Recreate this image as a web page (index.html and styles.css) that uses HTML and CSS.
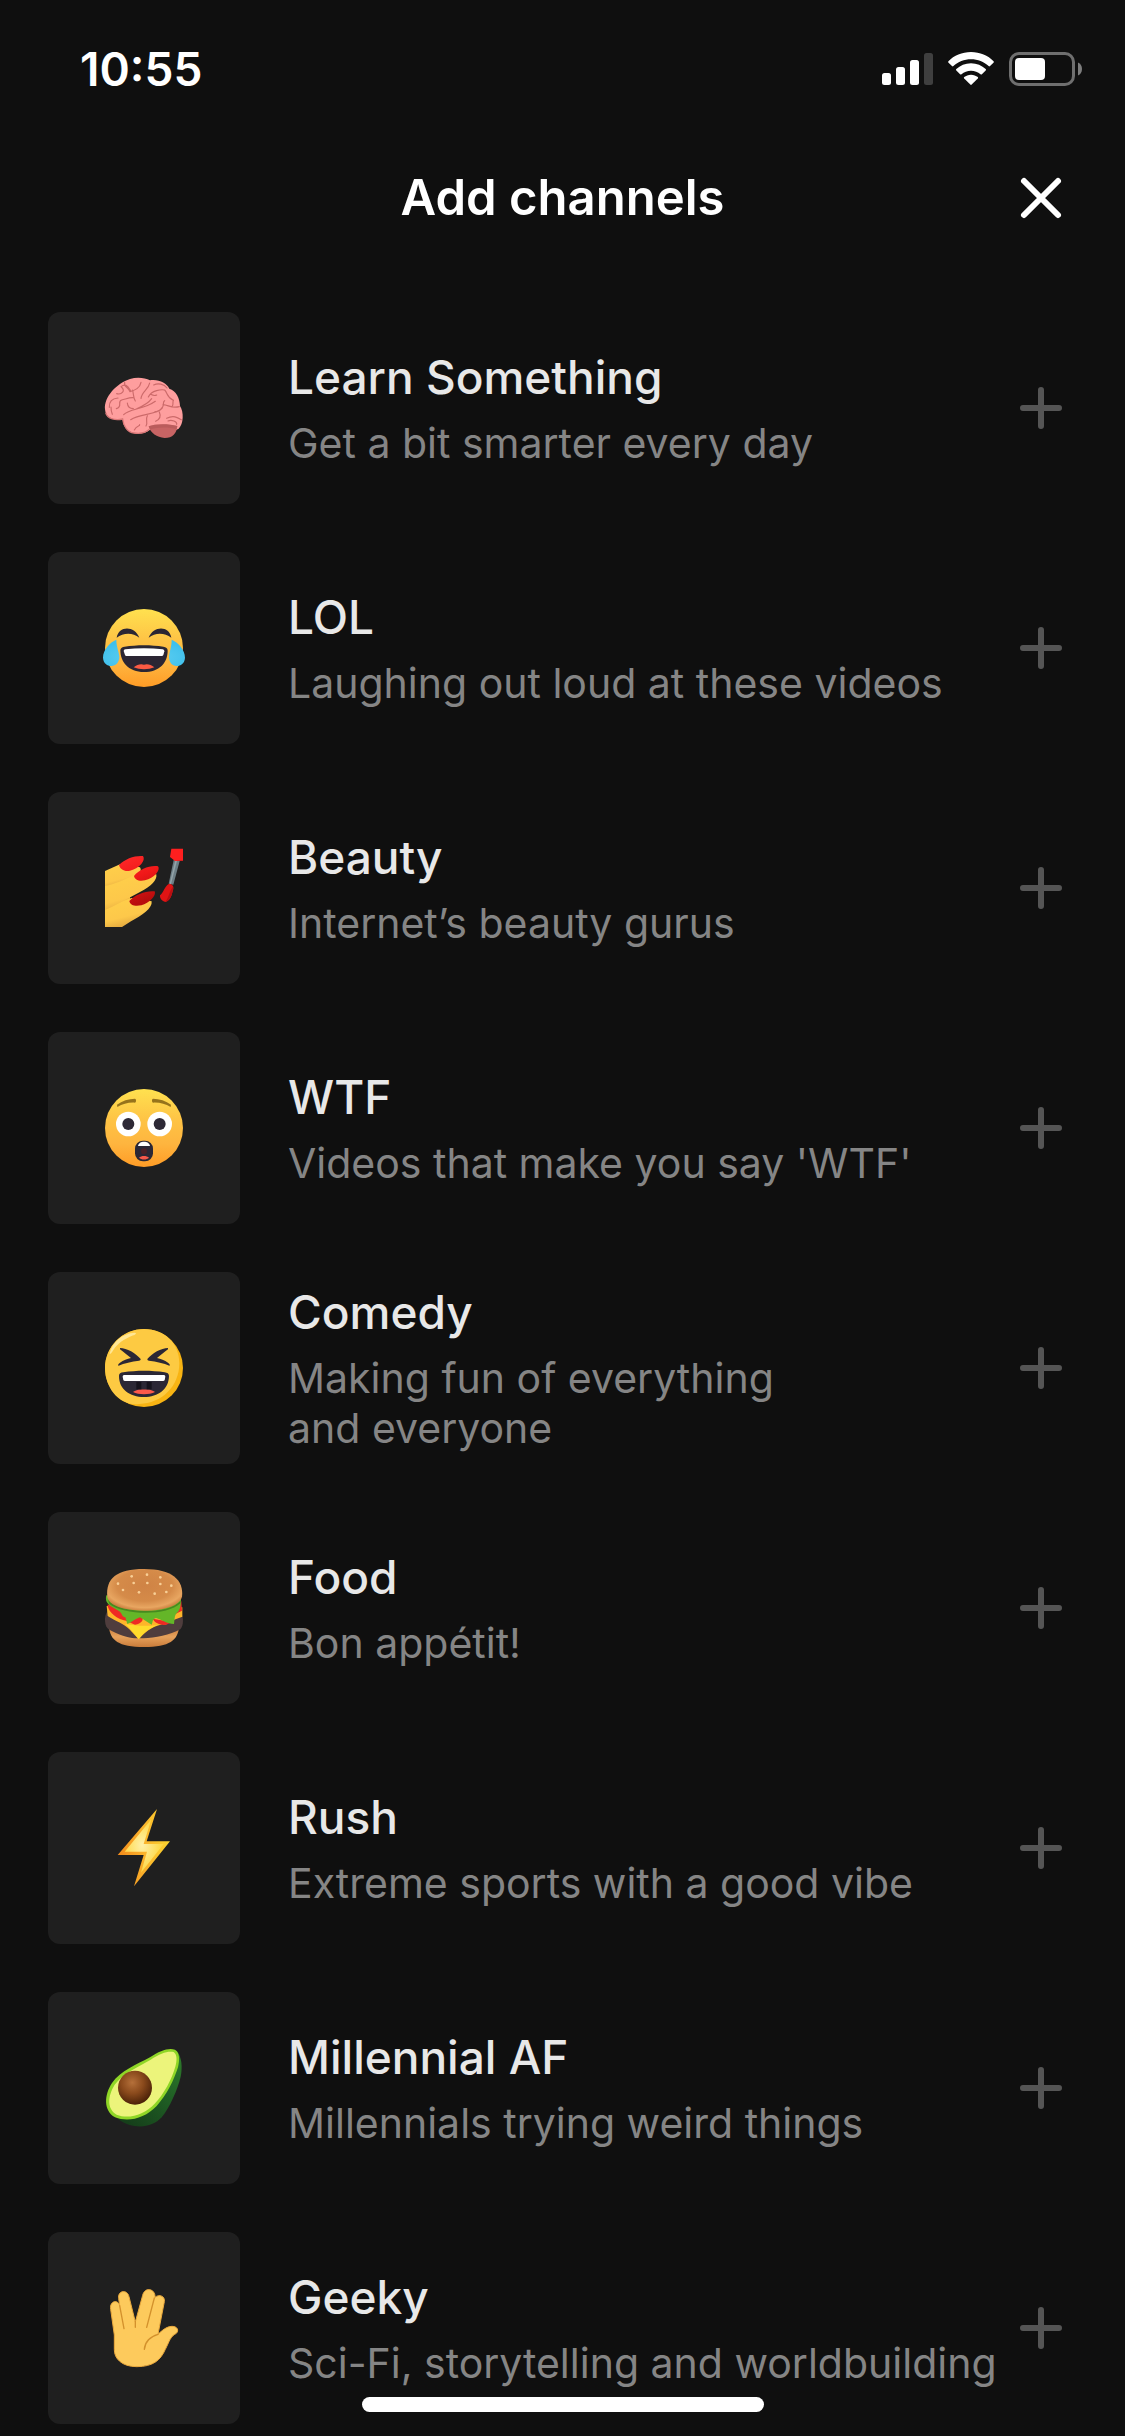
FILE: index.html
```html
<!DOCTYPE html>
<html lang="en">
<head>
<meta charset="utf-8">
<meta name="viewport" content="width=device-width, initial-scale=1">
<title>Add channels</title>
<link rel="stylesheet" href="styles.css">
</head>
<body>
<div class="status-bar">
  <time class="clock">10:55</time>
  <div class="indicators">
    <svg class="signal" viewBox="0 0 51 34" aria-hidden="true">
      <rect x="0" y="21" width="9" height="12" rx="2.5"/>
      <rect x="14" y="15" width="9" height="18" rx="2.5"/>
      <rect x="28" y="8" width="9" height="25" rx="2.5"/>
      <rect x="42" y="1" width="9" height="32" rx="2.5" fill="#3f3f3f"/>
    </svg>
    <svg class="wifi" viewBox="0 0 46 34" aria-hidden="true">
      <path d="M23 0C32 0 40 3.500 45.600 9.200Q46.200 10 45.500 10.700L42 14.100Q41.300 14.700 40.600 14.100C36 9.700 29.800 7.200 23 7.200S10 9.700 5.400 14.100Q4.700 14.700 4 14.100L.5 10.700Q-.2 10 .4 9.200C6 3.500 14 0 23 0Z"/>
      <path d="M23 11.300C28.700 11.300 33.900 13.500 37.700 17.100Q38.400 17.900 37.700 18.600L33.900 22.300Q33.200 22.900 32.500 22.300C29.900 20.100 26.700 18.700 23 18.700S16.100 20.100 13.500 22.300Q12.800 22.900 12.100 22.300L8.300 18.600Q7.600 17.900 8.300 17.100C12.100 13.500 17.300 11.300 23 11.300Z"/>
      <path d="M23 22.700C25.700 22.700 28 23.600 29.800 25.100Q30.500 25.900 29.800 26.600L23.700 32.600Q23 33.200 22.300 32.600L16.200 26.600Q15.500 25.900 16.200 25.100C18 23.600 20.300 22.700 23 22.700Z"/>
    </svg>
    <svg class="battery" viewBox="0 0 73 34" aria-hidden="true">
      <rect x="1.500" y="1.500" width="63" height="31" rx="8.500" fill="none" stroke="#6f6f6f" stroke-width="3"/>
      <rect x="6" y="6" width="30" height="22" rx="4"/>
      <path d="M69 10.500C71.500 11.500 73 14 73 17S71.500 22.500 69 23.500Z" fill="#7d7d7d"/>
    </svg>
  </div>
</div>

<header class="header">
  <h1 class="header-title">Add channels</h1>
  <button class="icon-button close" type="button" aria-label="Close">
    <svg viewBox="0 0 42 42" aria-hidden="true"><path d="M4 4 38 38M38 4 4 38"/></svg>
  </button>
</header>

<main>
<ul class="channels">
  <li class="channel">
    <div class="tile">
      <svg viewBox="195 207 234 234" aria-hidden="true">
        <path fill="#fe9e9e" d="M195 328C192 290 230 250 270 237 290 231 315 233 330 241 357 237 380 250 388 266 408 272 420 295 420 318 432 335 431 372 416 386L408 390 329 390C318 400 295 404 278 398 258 392 248 375 248 356 225 364 197 355 195 328Z"/>
        <path fill="none" stroke="#d97878" stroke-width="4" d="M197 338C202 358 228 362 248 357 250 378 262 397 282 399 300 402 317 398 328 388"/>
        <path fill="#c76464" d="M326 379C345 371 385 371 412 378 410 400 398 414 374 414 350 412 332 400 326 379Z"/>
        <path fill="#ae5656" opacity=".55" d="M326 379C345 371 385 371 412 378L409 388C390 381 350 381 330 389Z"/>
        <g fill="none" stroke="#cc6a6a" stroke-width="3.500" stroke-linecap="round">
          <path d="M230 281C245 285 258 272 244 261M243 260C255 250 262 256 271 271M254 247C250 260 265 262 270 275M270 275C285 270 300 265 303 247M278 270C281 285 280 295 286 303"/>
          <path d="M208 322C207 300 220 295 234 294M229 326C250 320 230 305 245 300 258 297 268 292 280 293M262 309C263 320 268 326 280 326M213 321C213 330 214 336 217 343"/>
          <path d="M251 344C270 325 310 330 346 304M290 326C305 320 325 310 335 296M303 295C305 275 325 270 329 249M325 291C335 270 365 268 374 270 384 280 380 292 400 301M341 255C355 248 372 252 381 264M332 283C342 288 345 288 350 285"/>
          <path d="M272 359C300 340 350 345 366 325 374 312 367 305 374 302M345 335C355 335 362 330 367 322M369 314C385 315 395 326 418 320M400 301C397 309 401 313 397 318M322 347C315 360 325 365 318 378M347 364C360 358 364 350 358 336M283 390C290 375 300 380 299 374M380 355C400 345 412 352 424 359M384 363C395 357 412 366 410 373"/>
        </g>
      </svg>
    </div>
    <div class="text">
      <h2 class="name">Learn Something</h2>
      <p class="about">Get a bit smarter every day</p>
    </div>
    <button class="icon-button add" type="button" aria-label="Add Learn Something"><svg viewBox="0 0 42 42" aria-hidden="true"><path d="M21 3V39M3 21H39"/></svg></button>
  </li>
  <li class="channel">
    <div class="tile">
      <svg viewBox="195 207 234 234" aria-hidden="true">
        <defs>
          <linearGradient id="face" x1="0" y1="0" x2="0" y2="1">
            <stop offset="0" stop-color="#ffe14f"/><stop offset=".4" stop-color="#fec345"/><stop offset=".7" stop-color="#feb53f"/><stop offset="1" stop-color="#ff9c26"/>
          </linearGradient>
          <radialGradient id="tear" cx=".5" cy=".65" r=".6">
            <stop offset="0" stop-color="#66d2f2"/><stop offset="1" stop-color="#3fc0ec"/>
          </radialGradient>
        </defs>
        <circle cx="312" cy="324" r="117" fill="url(#face)"/>
        <g fill="#2b2633">
          <path d="M230 293C236 256 284 256 298 293 278 277 250 278 230 293ZM326 293C340 256 388 256 394 293 374 278 346 277 326 293Z"/>
          <path d="M241 330C242 323 247 321 254 320 290 314 334 314 370 320 378 321 383 324 383 332 383 368 358 396 312 396S241 366 241 330Z"/>
        </g>
        <path fill="#fff" d="M251 333Q251 329 256 328C292 324 332 324 368 328Q374 329 373 334L370 345Q369 348 365 348H259Q256 348 255 345Z"/>
        <path fill="#fb5a43" d="M281 382C291 374 302 370 312 374 322 370 333 374 343 382 326 390 298 390 281 382Z"/>
        <path fill="url(#tear)" d="M229 299C210 306 189 330 189 353 190 370 202 378 214 378 228 377 238 367 238 350 237 335 229 321 229 299ZM395 299C414 306 435 330 435 353 434 370 422 378 410 378 396 377 387 367 387 350 388 335 395 321 395 299Z"/>
      </svg>
    </div>
    <div class="text">
      <h2 class="name">LOL</h2>
      <p class="about">Laughing out loud at these videos</p>
    </div>
    <button class="icon-button add" type="button" aria-label="Add LOL"><svg viewBox="0 0 42 42" aria-hidden="true"><path d="M21 3V39M3 21H39"/></svg></button>
  </li>
  <li class="channel">
    <div class="tile">
      <svg viewBox="195 207 234 234" aria-hidden="true">
        <defs>
          <linearGradient id="finger" x1="0" y1="0" x2=".4" y2="1">
            <stop offset="0" stop-color="#ffd04a"/><stop offset=".7" stop-color="#fdc84a"/><stop offset="1" stop-color="#e3a93f"/>
          </linearGradient>
          <linearGradient id="nail" x1="0" y1="0" x2=".3" y2="1">
            <stop offset="0" stop-color="#ff2a2a"/><stop offset=".5" stop-color="#f01818"/><stop offset="1" stop-color="#b80d0d"/>
          </linearGradient>
        </defs>
        <path fill="#f3ba45" d="M195 273H270V400H195Z"/>
        <path fill="#1f1f1f" d="M195 270H202L195 273Z"/>
        <path fill="url(#finger)" d="M195 273 240 253 300 262C306 272 300 280 285 289L195 322Z"/>
        <path fill="url(#finger)" d="M195 318C225 312 250 300 284 284L349 283C352 300 335 318 300 336L195 392Z"/>
        <path fill="url(#finger)" d="M195 390C225 378 250 360 275 354L335 364C338 385 305 407 273 424L246 441H195Z"/>
        <path fill="url(#nail)" d="M237 255C255 236 285 226 309 228 318 240 300 265 270 272 254 276 240 268 237 255ZM282 288C298 268 330 255 354 259 363 270 342 295 315 301 298 305 284 300 282 288ZM268 363C285 343 320 331 344 334 350 347 328 370 304 376 285 380 271 376 268 363Z"/>
        <path fill="#6d7e85" d="M401 240 419 243 400 314 386 311Z"/>
        <path fill="#93a3a9" d="M406 241 411 242 393 312 389 311Z"/>
        <path fill="#ff1f1f" d="M394 206H429V242L405 243 390 231Z"/>
        <path fill="#e01414" d="M388 311C396 312 402 318 400 327 395 345 392 362 376 366 366 364 359 355 360 346 370 338 376 315 388 311Z"/>
        <path fill="#b80f12" d="M399 320C400 334 392 362 376 366 386 352 388 334 399 320Z"/>
      </svg>
    </div>
    <div class="text">
      <h2 class="name">Beauty</h2>
      <p class="about">Internet’s beauty gurus</p>
    </div>
    <button class="icon-button add" type="button" aria-label="Add Beauty"><svg viewBox="0 0 42 42" aria-hidden="true"><path d="M21 3V39M3 21H39"/></svg></button>
  </li>
  <li class="channel">
    <div class="tile">
      <svg viewBox="195 207 234 234" aria-hidden="true">
        <circle cx="312" cy="324" r="117" fill="url(#face)"/>
        <path fill="#96731b" d="M231 254C246 242 266 236 285 236Q289 237 288 243 288 248 284 248C265 247 248 252 232 261ZM393 254C378 242 358 236 339 236Q335 237 336 243 336 248 340 248C359 247 376 252 392 261Z"/>
        <circle cx="265" cy="312" r="37" fill="#fff"/>
        <circle cx="359" cy="312" r="37" fill="#fff"/>
        <circle cx="265" cy="312" r="18" fill="#2d2936"/>
        <circle cx="359" cy="312" r="18" fill="#2d2936"/>
        <rect x="285" y="362" width="54" height="62" rx="24" fill="#2b2735"/>
        <path fill="#fff" d="M294 378C296 361 328 361 330 378Z"/>
        <circle cx="312" cy="394" r="9" fill="#4b2128"/>
        <path fill="#f9584a" d="M297 413C304 406 320 406 327 413 320 420 304 420 297 413Z"/>
      </svg>
    </div>
    <div class="text">
      <h2 class="name">WTF</h2>
      <p class="about">Videos that make you say 'WTF'</p>
    </div>
    <button class="icon-button add" type="button" aria-label="Add WTF"><svg viewBox="0 0 42 42" aria-hidden="true"><path d="M21 3V39M3 21H39"/></svg></button>
  </li>
  <li class="channel">
    <div class="tile">
      <svg viewBox="195 207 234 234" aria-hidden="true">
        <circle cx="312" cy="324" r="117" fill="#f8b413"/>
        <path fill="#fdca42" d="M312 207C376 207 418 252 418 310 418 380 365 430 298 432 240 440 195 385 195 324 195 260 248 207 312 207Z"/>
        <path fill="#ffe795" d="M209 280C217 246 248 220 284 218 292 219 286 224 280 226 250 238 232 252 220 270 214 280 208 286 209 280Z"/>
        <g fill="#2b2735">
          <path d="M240 264C260 264 288 280 302 297 302 301 300 302 297 302 275 304 252 310 236 317 232 316 236 311 240 308 250 301 262 297 273 294 262 286 250 275 240 268Z"/>
          <path d="M384 264C364 264 336 280 322 297 322 301 324 302 327 302 349 304 372 310 388 317 392 316 388 311 384 308 374 301 362 297 351 294 362 286 374 275 384 268Z"/>
          <path d="M237 348C237 340 242 338 250 337 290 331 334 331 374 337 382 338 387 341 387 348 386 388 355 411 312 411S237 388 237 348Z"/>
        </g>
        <path fill="#fff" d="M248 350Q248 346 252 345H372Q376 346 376 350L374 360Q373 363 369 363H255Q251 363 250 360Z"/>
        <path fill="#15121c" d="M289 366H304V388H289ZM320 366H335V388H320Z"/>
        <path fill="#fb594a" d="M279 396C289 386 335 386 345 396 328 405 296 405 279 396Z"/>
      </svg>
    </div>
    <div class="text">
      <h2 class="name">Comedy</h2>
      <p class="about">Making fun of everything and&nbsp;everyone</p>
    </div>
    <button class="icon-button add" type="button" aria-label="Add Comedy"><svg viewBox="0 0 42 42" aria-hidden="true"><path d="M21 3V39M3 21H39"/></svg></button>
  </li>
  <li class="channel">
    <div class="tile">
      <svg viewBox="195 207 234 234" aria-hidden="true">
        <defs>
          <radialGradient id="bun" cx=".5" cy=".4" r=".62">
            <stop offset="0" stop-color="#cf8345"/><stop offset=".6" stop-color="#d58b49"/><stop offset=".85" stop-color="#e8a661"/><stop offset="1" stop-color="#c97c3d"/>
          </radialGradient>
          <linearGradient id="base" x1="0" y1="0" x2="0" y2="1">
            <stop offset="0" stop-color="#c77a38"/><stop offset=".5" stop-color="#e7a25c"/><stop offset="1" stop-color="#c87b3a"/>
          </linearGradient>
        </defs>
        <path fill="url(#base)" d="M207 380C210 420 235 441 312 441S414 420 417 380Z"/>
        <path fill="#4f3d3d" d="M203 332C190 350 194 380 206 388 235 405 265 414 285 415H310C345 414 390 405 421 388 432 375 430 350 424 340Z"/>
        <path fill="#fdb52a" d="M200 318 203 348C230 365 250 370 268 388L296 418C310 400 335 380 362 374L427 350V322Z"/>
        <path fill="#ffdb2c" d="M255 372C290 378 320 380 355 374 325 385 310 400 296 418 285 403 270 385 255 372Z"/>
        <path fill="#ee2a24" d="M202 314C206 340 235 358 258 362L285 374C305 370 312 360 306 350L400 345 426 332 424 304ZM338 356C345 368 355 374 378 375L395 366Z"/>
        <path fill="#64b628" d="M199 286C195 300 200 312 215 320L238 334C250 345 244 350 256 352L262 372C275 368 285 356 300 352L335 374C340 365 335 358 348 354 365 358 380 372 402 372 405 350 403 345 414 336 422 325 423 312 423 294Z"/>
        <path fill="#468a20" d="M204 300C240 340 380 348 422 302L421 310C380 350 250 345 208 312Z"/>
        <path fill="url(#bun)" d="M202 292C196 235 230 207 312 207 395 207 432 240 426 290 420 316 375 332 312 332S208 316 202 292Z"/>
        <g fill="#f8cf96">
          <circle cx="234" cy="251" r="4"/><circle cx="249" cy="270" r="4"/><circle cx="275" cy="229" r="4"/><circle cx="281" cy="249" r="4"/><circle cx="297" cy="277" r="4"/><circle cx="321" cy="224" r="4"/><circle cx="322" cy="249" r="4"/><circle cx="344" cy="281" r="4"/><circle cx="361" cy="232" r="4"/><circle cx="361" cy="252" r="4"/><circle cx="379" cy="276" r="4"/><circle cx="394" cy="257" r="4"/>
        </g>
      </svg>
    </div>
    <div class="text">
      <h2 class="name">Food</h2>
      <p class="about">Bon appétit!</p>
    </div>
    <button class="icon-button add" type="button" aria-label="Add Food"><svg viewBox="0 0 42 42" aria-hidden="true"><path d="M21 3V39M3 21H39"/></svg></button>
  </li>
  <li class="channel">
    <div class="tile">
      <svg viewBox="195 207 234 234" aria-hidden="true">
        <defs>
          <linearGradient id="bolt" x1="0" y1=".5" x2="1" y2=".4">
            <stop offset="0" stop-color="#f28a1b"/><stop offset=".5" stop-color="#fbb32b"/><stop offset="1" stop-color="#fbd52f"/>
          </linearGradient>
          <radialGradient id="glow" cx=".45" cy=".48" r=".5">
            <stop offset="0" stop-color="#fff0a8"/><stop offset="1" stop-color="#fed843"/>
          </radialGradient>
        </defs>
        <path fill="url(#bolt)" d="M351 207 233 345H311L282 439 390 304H320Z"/>
        <path fill="url(#glow)" d="M334 238 254 335H321L303 398 371 312H311Z"/>
      </svg>
    </div>
    <div class="text">
      <h2 class="name">Rush</h2>
      <p class="about">Extreme sports with a good vibe</p>
    </div>
    <button class="icon-button add" type="button" aria-label="Add Rush"><svg viewBox="0 0 42 42" aria-hidden="true"><path d="M21 3V39M3 21H39"/></svg></button>
  </li>
  <li class="channel">
    <div class="tile">
      <svg viewBox="195 207 234 234" aria-hidden="true">
        <defs>
          <radialGradient id="pit" cx=".42" cy=".35" r=".65">
            <stop offset="0" stop-color="#b5703a"/><stop offset=".5" stop-color="#8a4a1c"/><stop offset="1" stop-color="#4c2208"/>
          </radialGradient>
          <linearGradient id="skin" x1="1" y1="0" x2=".2" y2="1">
            <stop offset="0" stop-color="#2f7d2b"/><stop offset=".5" stop-color="#1f5d24"/><stop offset="1" stop-color="#153f1a"/>
          </linearGradient>
        </defs>
        <path fill="url(#skin)" d="M410 212C425 230 428 260 422 290 412 330 390 380 365 412 335 445 280 450 235 418Z"/>
        <path fill="#8fd626" d="M330 232C360 212 385 203 405 209 420 218 419 240 414 262 402 300 380 345 350 378 315 415 265 428 225 412 190 392 192 345 216 309 242 272 290 254 330 232Z"/>
        <path fill="#ecf47b" d="M332 239C362 219 384 212 401 216 412 224 411 242 406 260 395 298 373 340 344 371 312 405 266 418 230 404 200 386 203 348 224 314 250 279 293 262 332 239Z"/>
        <circle cx="285" cy="323" r="51" fill="url(#pit)"/>
      </svg>
    </div>
    <div class="text">
      <h2 class="name">Millennial AF</h2>
      <p class="about">Millennials trying weird things</p>
    </div>
    <button class="icon-button add" type="button" aria-label="Add Millennial AF"><svg viewBox="0 0 42 42" aria-hidden="true"><path d="M21 3V39M3 21H39"/></svg></button>
  </li>
  <li class="channel">
    <div class="tile">
      <svg viewBox="195 207 234 234" aria-hidden="true">
        <path fill="#fdca5c" stroke="#eba93c" stroke-width="3" d="M223 345 212 268C208 243 233 237 239 256L236 236C232 211 262 207 267 230L286 306 308 226C314 199 347 206 345 232 358 221 376 229 373 245L354 343C366 332 378 320 396 319 413 319 417 332 409 340 390 350 388 365 376 388 362 420 340 440 290 440 245 440 222 415 223 388Z"/>
        <g fill="none" stroke="#d3912c" stroke-width="4" stroke-linecap="round">
          <path d="M239 257 252 326M343 234 320 322M286 304V322M354 343C330 350 315 366 313 388"/>
        </g>
      </svg>
    </div>
    <div class="text">
      <h2 class="name">Geeky</h2>
      <p class="about">Sci-Fi, storytelling and worldbuilding</p>
    </div>
    <button class="icon-button add" type="button" aria-label="Add Geeky"><svg viewBox="0 0 42 42" aria-hidden="true"><path d="M21 3V39M3 21H39"/></svg></button>
  </li>
</ul>
</main>
<div class="home-indicator"></div>
</body>
</html>
```
FILE: styles.css
```css
* {
  box-sizing: border-box;
}

body {
  margin: 0;
  background: #0f0f0f;
  color: #fff;
  font-family: Inter, "Liberation Sans", sans-serif;
}

h1,
h2,
p,
ul {
  margin: 0;
  padding: 0;
}

svg {
  display: block;
  overflow: visible;
}

.status-bar {
  display: flex;
  align-items: center;
  justify-content: space-between;
  height: 132px;
  padding: 6px 43px 0 80px;
}

.clock {
  font-size: 46px;
  font-weight: 600;
  line-height: 54px;
}

.indicators {
  display: flex;
  align-items: center;
  gap: 15px;
  fill: #fff;
}

.signal {
  width: 51px;
  height: 34px;
}

.wifi {
  width: 46px;
  height: 34px;
}

.battery {
  width: 73px;
  height: 34px;
}

.header {
  display: grid;
  grid-template-columns: 72px 1fr 72px;
  align-items: center;
  height: 132px;
  padding: 0 48px;
}

.header-title {
  grid-column: 2;
  font-size: 49px;
  font-weight: 600;
  line-height: 60px;
  text-align: center;
}

.icon-button {
  display: grid;
  place-items: center;
  flex: none;
  width: 72px;
  height: 72px;
  padding: 0;
  border: 0;
  background: none;
  cursor: pointer;
}

.icon-button svg {
  width: 42px;
  height: 42px;
  fill: none;
  stroke: currentColor;
  stroke-width: 6px;
  stroke-linecap: round;
}

.close {
  color: #fff;
}

.add {
  color: #555;
}

.channels {
  display: flex;
  flex-direction: column;
  gap: 48px;
  padding: 48px 48px 12px;
  list-style: none;
}

.channel {
  display: flex;
  align-items: center;
}

.tile {
  display: grid;
  place-items: center;
  flex: none;
  width: 192px;
  height: 192px;
  margin-right: 48px;
  border-radius: 12px;
  background: #1f1f1f;
}

.tile svg {
  width: 78px;
  height: 78px;
}

.text {
  flex: 1;
  min-width: 0;
}

.name {
  margin-bottom: 12px;
  color: #e8e8e8;
  font-size: 46px;
  font-weight: 500;
  line-height: 58px;
}

.about {
  color: #858585;
  font-size: 41px;
  line-height: 50px;
}

.home-indicator {
  position: fixed;
  bottom: 24px;
  left: 50%;
  width: 402px;
  height: 15px;
  border-radius: 8px;
  background: #fff;
  transform: translateX(-50%);
}
```
